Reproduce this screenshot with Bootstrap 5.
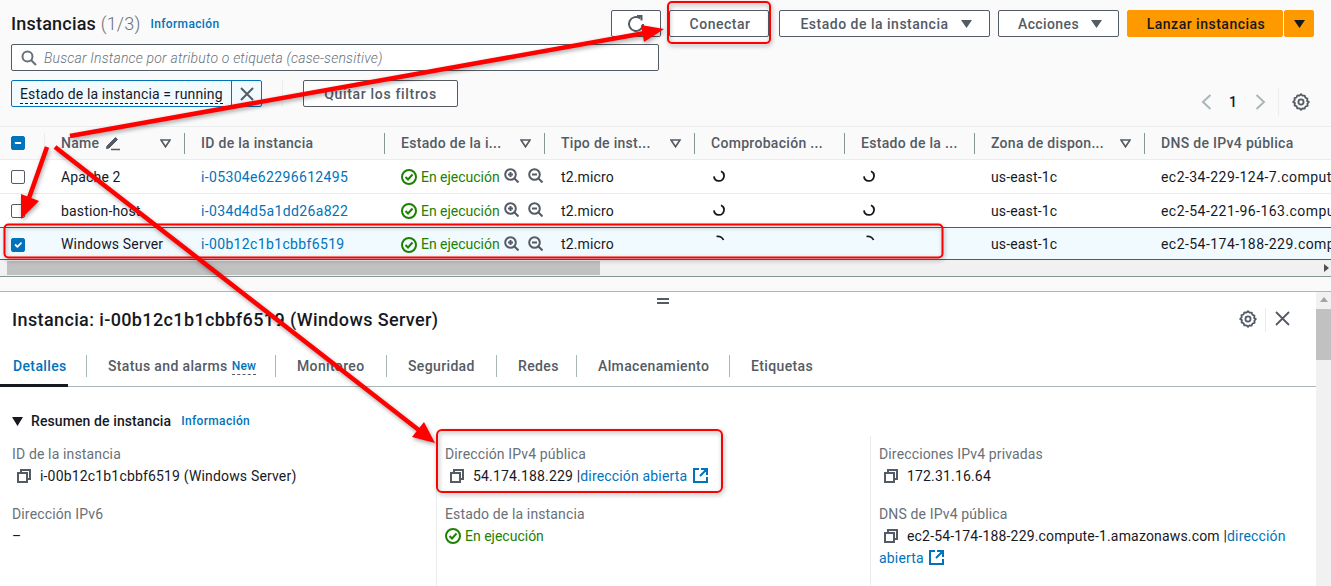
<!DOCTYPE html>
<html lang="es">
<head>
<meta charset="utf-8">
<title>Instancias</title>
<link href="https://cdn.jsdelivr.net/npm/bootstrap@5.3.0/dist/css/bootstrap.min.css" rel="stylesheet">
<style>
html,body{height:586px;overflow:hidden;margin:0}
body{font-family:Roboto,"Liberation Sans",sans-serif;font-size:14px;color:#16191f;background:#fff;position:relative;width:1331px}
a{text-decoration:none;color:#0073bb}
svg{display:block;flex:none}
.toppanel{background:#fafafa;height:126px;padding:10px 17px 0 11px}
.h-title{font-size:18px;font-weight:500;line-height:27px;white-space:nowrap;letter-spacing:.2px}
.h-title span{font-weight:300;color:#687078}
.infolink{font-size:12px;font-weight:500;color:#0073bb;margin-left:10px;letter-spacing:.35px}
.aws-btn{height:27px;border:1px solid #545b64;border-radius:2px;background:#fff;color:#545b64;font-size:14px;font-weight:500;padding:0 0 0 2px;display:flex;align-items:center;justify-content:center;letter-spacing:.5px;line-height:1}
.aws-btn:hover{background:#fff;color:#545b64;border-color:#545b64}
.w-refresh{width:50px;padding:0}.w-con{width:100px;margin-left:8px}.w-est{width:211px;margin-left:10px;padding-left:3px}.w-acc{width:121px;margin-left:8px;padding-left:3px;letter-spacing:.38px}
.w-quit{width:155px;letter-spacing:.68px;padding:1px 0 0}
.aws-orange{background:#ff9900;border-color:#ff9900;color:#16191f}
.aws-orange:hover{background:#ff9900;border-color:#ff9900;color:#16191f}
.w-lan{width:156px;margin-left:8px}.w-car{width:30px;margin-left:1px;padding:0}
.caret-gap{margin-left:12px}
.searchbox{width:648px;height:27px;margin-top:7px;border:1px solid #545b64;border-radius:2px;background:#fff;padding:1px 0 0 9px;gap:7px;font-style:italic;color:#687078;font-size:14px;font-weight:300;letter-spacing:.2px}
.chiprow{margin-top:9px;height:27px}
.chip{width:251px;height:27px;border:1px solid #0073bb;border-radius:2px;background:#f1faff}
.chip-t{flex:1;padding:1px 0 0 8px;white-space:nowrap;line-height:25px;position:relative;letter-spacing:.14px;font-weight:400;color:#16191f}
.chip-t u{text-decoration:none;border-bottom:1px dashed #16191f;padding-bottom:1px}
.chip-x{width:30px;border-left:1px solid #0073bb;display:flex;align-items:center;justify-content:center}
.vdiv{width:1px;height:27px;background:#eaeded;margin:0 20px}
.pager{margin-left:auto;margin-top:15px;height:14px;width:113px;padding-left:0;position:relative}
.pager-num{width:14px;text-align:center;font-weight:500;margin:0 15px 0 14px}
.pager-sep{width:1px;height:28px;background:#eaeded;margin:0 13px 0 12px}
.tablewrap{overflow:hidden;height:134px;border-top:1px solid #eaeded;background:#fff}
table.insts{table-layout:fixed;width:1445px;border-collapse:separate;border-spacing:0;margin:0}
.insts th,.insts td{height:33.3px;padding:0 0 0 16px;white-space:nowrap;overflow:hidden;vertical-align:middle;border-bottom:1px solid #eaeded;background:#fff;font-weight:400;color:#16191f;letter-spacing:.15px;box-shadow:none}
.insts td{padding-top:2px}
.insts th{background:#fafafa;color:#545b64;font-weight:500;letter-spacing:.3px;position:relative}
.insts th.cbx{padding:0 0 0 11px}
.insts td.cbx{padding:2px 0 0 11px}
.insts .sel td{background:#f1faff;border-top:1px solid #0073bb;border-bottom:1px solid #0073bb}
.insts .row-before td{border-bottom:0}
.insts td.dist{color:#0073bb;letter-spacing:.35px}
.insts td.dnscell{letter-spacing:.45px}
.thsep{position:absolute;right:0;top:6px;height:21px;width:1px;background:#879596}
.thsep.lite{background:#eaeded}
.thcell{display:flex;align-items:center}
.sorter{position:absolute;right:14px;top:12px}
.form-check-input.awscheck{width:14px;height:14px;margin:0;border:1px solid #545b64;border-radius:2px;display:block;box-shadow:none;background-color:#fff}
.form-check-input.awscheck:checked,.form-check-input.awscheck:indeterminate{background-color:#0073bb;border-color:#0073bb}
.stat{color:#1d8102;display:flex;align-items:center;gap:4px;letter-spacing:0}
.insts .stat{letter-spacing:-.02px}
.zooms{display:flex;gap:9px;margin-left:0;margin-top:-3px}
.spinner{margin-left:2px;margin-top:-2px}
.spinner.up{margin-left:3px;margin-top:-8px}
.hscroll{background:#f1f1f1;display:flex;padding:1px 0 0 7px;border-bottom:1px solid #879596;height:17px}
.hthumb{width:593px;height:14px;background:#c1c1c1}
.hscroll-r{margin-left:auto;margin-right:2px;margin-top:3px}
.gapband{height:15px;background:#fafafa;border-bottom:1px solid #aab7b8}
.detail{display:flex;height:294px;overflow:hidden;background:#fff;position:relative}
.dmain{width:1316px;flex:none}
.vscroll{width:15px;background:#f1f1f1;flex:none;padding-top:17px;position:relative}
.vthumb{height:51px;background:#c1c1c1}
.grip{position:absolute;left:657px;top:6px;width:12px;height:6px;border-top:2px solid #545b64;border-bottom:2px solid #545b64}
.dhead{height:58px;padding:16px 12px 0 12px}
.dh-title{font-size:18px;font-weight:500;line-height:24px;letter-spacing:.38px}
.dh-right{padding-right:14px}
.dh-sep{width:1px;height:24px;background:#eaeded;margin:0 8px}
.tabbar{height:37px;border-bottom:1px solid #aab7b8;position:relative}
.tabitem{height:36px;color:#545b64;font-weight:500;letter-spacing:.36px;display:flex;align-items:center;white-space:nowrap;position:relative;padding-bottom:4px}
.tabitem.on{color:#0073bb}
.tabitem.on::before{content:"";position:absolute;left:0;bottom:-1px;width:68px;height:3px;background:#16191f}
.tabitem.divided::after{content:"";position:absolute;right:0;top:5px;height:22px;width:1px;background:#aab7b8}
.tnew{color:#0073bb;font-size:12px;border-bottom:1px dashed #545b64;margin:2px 0 0 4px;line-height:15px;letter-spacing:.2px}
.rsum{height:20px;padding:24px 0 0 12px;box-sizing:content-box;font-size:14px;font-weight:500;line-height:20px;letter-spacing:.1px;color:#16191f}
.colsgrid{display:grid;grid-template-columns:424px 434px 1fr;margin-left:12px;margin-top:5px}
.gcol{padding-left:8px;padding-right:5px;border-left:1px solid #eaeded;padding-top:8px;height:160px}
.gcol:first-child{border-left:0;padding-left:0}
.flabel{color:#687078;line-height:20px;letter-spacing:.14px;height:20px}
.fval{line-height:22px;letter-spacing:.17px;margin-top:1px;height:39px}
.copyic{display:inline-block;vertical-align:-2px;margin:0 9px 0 5px}
.extic{display:inline-block;vertical-align:-2px;margin-left:2px}
.overlay{position:absolute;left:0;top:0;width:1331px;height:586px;pointer-events:none;overflow:visible}
</style>
</head>
<body>
<svg width="0" height="0" style="position:absolute" aria-hidden="true">
  <symbol id="ok" viewBox="0 0 16 16"><g fill="none" stroke="#1d8102" stroke-width="2"><circle cx="8" cy="8" r="7"/><path d="M4.500 8 7 10.500 11.500 5.500"/></g></symbol>
  <symbol id="zin" viewBox="0 0 15 15"><g fill="none" stroke="#545b64" stroke-width="2"><circle cx="6.500" cy="6.500" r="5.300"/><path d="M10.500 10.500 14.500 14.500M4 6.500H9M6.500 4V9"/></g></symbol>
  <symbol id="zout" viewBox="0 0 15 15"><g fill="none" stroke="#545b64" stroke-width="2"><circle cx="6.500" cy="6.500" r="5.300"/><path d="M10.500 10.500 14.500 14.500M4 6.500H9"/></g></symbol>
  <symbol id="spin" viewBox="0 0 12 12"><path d="M8 1.300A5 5 0 1 1 1 6.300" fill="none" stroke="#16191f" stroke-width="1.800"/></symbol>
  <symbol id="spinup" viewBox="0 0 12 12"><path d="M2.500 1.500A6 6 0 0 1 9.500 5" fill="none" stroke="#16191f" stroke-width="1.800"/></symbol>
  <symbol id="sort" viewBox="0 0 11 9"><path d="M1 1H10L5.500 7.800Z" fill="none" stroke="#545b64" stroke-width="1.600"/></symbol>
  <symbol id="copy" viewBox="0 0 14 14"><g fill="none" stroke="#545b64" stroke-width="2"><path d="M4 4V1H13V10H10"/><rect x="1" y="4" width="9" height="9"/></g></symbol>
  <symbol id="ext" viewBox="0 0 15 15"><path d="M6 1H1V14H14V9M8 1H14V7M14 1 7 8" fill="none" stroke="#0073bb" stroke-width="2"/></symbol>
  <symbol id="gear" viewBox="0 0 16 16"><g fill="none" stroke="#545b64" stroke-width="1.600"><path d="M8 1 9.300 2.400 11.300 2.300 11.900 4.200 13.700 5 13.400 7 15 8 13.700 9.500 13.900 11.400 12 12 11.200 13.800 9.300 13.600 8 15 6.700 13.600 4.700 13.700 4.100 11.900 2.300 11 2.600 9 1 8 2.400 6.500 2.200 4.600 4 4 4.800 2.200 6.700 2.400Z" stroke-linejoin="round"/><circle cx="8" cy="8" r="2.300"/></g></symbol>
</svg>
<div class="toppanel">
  <div class="d-flex align-items-center">
    <div class="h-title">Instancias <span>(1/3)</span></div>
    <a class="infolink" href="#">Información</a>
    <button class="btn aws-btn w-refresh ms-auto" type="button" aria-label="Actualizar">
      <svg width="18" height="18" viewBox="0 0 18 18" fill="none" stroke="#545b64" stroke-width="2"><path d="M13.500 3.600A7 7 0 1 0 16 9"/><path d="M10 1 L14.500 1 L14.500 5.500" /></svg>
    </button>
    <button class="btn aws-btn w-con" type="button">Conectar</button>
    <button class="btn aws-btn w-est" type="button">Estado de la instancia<svg class="caret-gap" width="11" height="8" viewBox="0 0 11 8"><path d="M0 0H11L5.500 8Z" fill="#545b64"/></svg></button>
    <button class="btn aws-btn w-acc" type="button">Acciones<svg class="caret-gap" width="11" height="8" viewBox="0 0 11 8"><path d="M0 0H11L5.500 8Z" fill="#545b64"/></svg></button>
    <button class="btn aws-btn aws-orange w-lan" type="button">Lanzar instancias</button>
    <button class="btn aws-btn aws-orange w-car" type="button" aria-label="Más"><svg width="11" height="8" viewBox="0 0 11 8"><path d="M0 0H11L5.500 8Z" fill="#16191f"/></svg></button>
  </div>
  <div class="searchbox d-flex align-items-center">
    <svg width="16" height="16" viewBox="0 0 16 16" fill="none" stroke="#687078" stroke-width="2"><circle cx="6.500" cy="6.500" r="5"/><path d="M10.200 10.200 15 15"/></svg>
    <span>Buscar Instance por atributo o etiqueta (case-sensitive)</span>
  </div>
  <div class="chiprow d-flex">
    <div class="chip d-flex">
      <div class="chip-t"><u>Estado de la instancia = running</u></div>
      <div class="chip-x"><svg width="14" height="14" viewBox="0 0 14 14" stroke="#545b64" stroke-width="2"><path d="M1 1 13 13M13 1 1 13"/></svg></div>
    </div>
    <div class="vdiv"></div>
    <button class="btn aws-btn w-quit" type="button">Quitar los filtros</button>
    <div class="pager d-flex align-items-center">
      <svg width="11" height="16" viewBox="0 0 11 16" fill="none" stroke="#aab7b8" stroke-width="2"><path d="M9.500 1 2 8l7.500 7"/></svg>
      <div class="pager-num">1</div>
      <svg width="11" height="16" viewBox="0 0 11 16" fill="none" stroke="#aab7b8" stroke-width="2"><path d="M1.500 1 9 8l-7.500 7"/></svg>
      <div class="pager-sep"></div>
      <svg width="18" height="18"><use href="#gear"/></svg>
    </div>
  </div>
</div>

<div class="tablewrap">
<table class="table insts">
  <colgroup><col style="width:45px"><col style="width:140px"><col style="width:200px"><col style="width:160px"><col style="width:150px"><col style="width:150px"><col style="width:130px"><col style="width:170px"><col style="width:300px"></colgroup>
  <thead><tr>
    <th class="cbx"><input id="allcheck" class="form-check-input awscheck" type="checkbox" aria-label="Todas"><i class="thsep lite"></i></th>
    <th><div class="thcell">Name<svg style="margin-left:5px" width="17" height="16" viewBox="0 0 17 16" fill="none" stroke="#545b64"><path d="M3 11 11.500 2.500 13.500 4.500 5 13 2.500 13.500Z" fill="#545b64" stroke-width="1"/><path d="M7 14.500H16" stroke-width="1.500"/></svg></div>
      <svg class="sorter" width="11" height="9"><use href="#sort"/></svg><i class="thsep"></i></th>
    <th>ID de la instancia<i class="thsep"></i></th>
    <th>Estado de la i...<svg class="sorter" width="11" height="9"><use href="#sort"/></svg><i class="thsep"></i></th>
    <th>Tipo de inst...<svg class="sorter" width="11" height="9"><use href="#sort"/></svg><i class="thsep"></i></th>
    <th>Comprobación ...<i class="thsep"></i></th>
    <th>Estado de la ...<i class="thsep"></i></th>
    <th>Zona de dispon...<svg class="sorter" width="11" height="9"><use href="#sort"/></svg><i class="thsep"></i></th>
    <th>DNS de IPv4 pública</th>
  </tr></thead>
  <tbody>
  <tr>
    <td class="cbx"><input class="form-check-input awscheck" type="checkbox" aria-label="Apache 2"></td>
    <td>Apache 2</td><td class="dist">i-05304e62296612495</td>
    <td><div class="stat"><svg width="16" height="16"><use href="#ok"/></svg>En ejecución<div class="zooms"><svg width="15" height="15"><use href="#zin"/></svg><svg width="15" height="15"><use href="#zout"/></svg></div></div></td>
    <td>t2.micro</td>
    <td><svg class="spinner" width="12" height="12"><use href="#spin"/></svg></td>
    <td><svg class="spinner" width="12" height="12"><use href="#spin"/></svg></td>
    <td>us-east-1c</td><td class="dnscell">ec2-34-229-124-7.compute-1.amazonaws.com</td>
  </tr>
  <tr class="row-before">
    <td class="cbx"><input class="form-check-input awscheck" type="checkbox" aria-label="bastion-host"></td>
    <td>bastion-host</td><td class="dist">i-034d4d5a1dd26a822</td>
    <td><div class="stat"><svg width="16" height="16"><use href="#ok"/></svg>En ejecución<div class="zooms"><svg width="15" height="15"><use href="#zin"/></svg><svg width="15" height="15"><use href="#zout"/></svg></div></div></td>
    <td>t2.micro</td>
    <td><svg class="spinner" width="12" height="12"><use href="#spin"/></svg></td>
    <td><svg class="spinner" width="12" height="12"><use href="#spin"/></svg></td>
    <td>us-east-1c</td><td class="dnscell">ec2-54-221-96-163.compute-1.amazonaws.com</td>
  </tr>
  <tr class="sel">
    <td class="cbx"><input class="form-check-input awscheck" type="checkbox" checked aria-label="Windows Server"></td>
    <td>Windows Server</td><td class="dist">i-00b12c1b1cbbf6519</td>
    <td><div class="stat"><svg width="16" height="16"><use href="#ok"/></svg>En ejecución<div class="zooms"><svg width="15" height="15"><use href="#zin"/></svg><svg width="15" height="15"><use href="#zout"/></svg></div></div></td>
    <td>t2.micro</td>
    <td><svg class="spinner up" width="12" height="12"><use href="#spinup"/></svg></td>
    <td><svg class="spinner up" width="12" height="12"><use href="#spinup"/></svg></td>
    <td>us-east-1c</td><td class="dnscell">ec2-54-174-188-229.compute-1.amazonaws.com</td>
  </tr>
  </tbody>
</table>
</div>
<div class="hscroll"><div class="hthumb"></div><svg class="hscroll-r" width="5" height="8" viewBox="0 0 5 8"><path d="M0 0 5 4 0 8Z" fill="#505050"/></svg></div>
<div class="gapband"></div>

<div class="detail">
  <div class="grip"></div>
  <div class="dmain">
    <div class="dhead d-flex">
      <div class="dh-title">Instancia: i-00b12c1b1cbbf6519 (Windows Server)</div>
      <div class="ms-auto d-flex align-items-start dh-right">
        <svg width="18" height="18" style="margin-top:2px"><use href="#gear"/></svg>
        <div class="dh-sep"></div>
        <svg width="15" height="15" viewBox="0 0 15 15" stroke="#545b64" stroke-width="1.800" style="margin-left:1px;margin-top:3px"><path d="M1 1 14 14M14 1 1 14"/></svg>
      </div>
    </div>
    <div class="tabbar d-flex">
      <div class="tabitem on divided" style="padding-left:13px;width:87px">Detalles</div>
      <div class="tabitem divided" style="width:189px;padding-left:21px">Status and alarms<span class="tnew">New</span></div>
      <div class="tabitem divided" style="width:111px;padding-left:21px">Monitoreo</div>
      <div class="tabitem divided" style="width:110px;padding-left:21px">Seguridad</div>
      <div class="tabitem divided" style="width:80px;padding-left:21px">Redes</div>
      <div class="tabitem divided" style="width:153px;padding-left:21px">Almacenamiento</div>
      <div class="tabitem" style="width:100px;padding-left:21px">Etiquetas</div>
    </div>
    <div class="rsum d-flex align-items-center">
      <svg width="11" height="9" viewBox="0 0 11 9" style="margin-right:8px"><path d="M0 0H11L5.500 9Z" fill="#16191f"/></svg>Resumen de instancia<a class="infolink" href="#">Información</a>
    </div>
    <div class="colsgrid">
      <div class="gcol">
        <div class="flabel">ID de la instancia</div>
        <div class="fval"><svg class="copyic" width="14" height="14"><use href="#copy"/></svg>i-00b12c1b1cbbf6519 (Windows Server)</div>
        <div class="flabel">Dirección IPv6</div>
        <div class="fval">–</div>
      </div>
      <div class="gcol">
        <div class="flabel">Dirección IPv4 pública</div>
        <div class="fval"><svg class="copyic" width="14" height="14"><use href="#copy"/></svg>54.174.188.229 |<a href="#">dirección abierta</a> <svg class="extic" width="15" height="15"><use href="#ext"/></svg></div>
        <div class="flabel">Estado de la instancia</div>
        <div class="fval"><div class="stat"><svg width="16" height="16"><use href="#ok"/></svg>En ejecución</div></div>
      </div>
      <div class="gcol">
        <div class="flabel">Direcciones IPv4 privadas</div>
        <div class="fval"><svg class="copyic" width="14" height="14"><use href="#copy"/></svg>172.31.16.64</div>
        <div class="flabel">DNS de IPv4 pública</div>
        <div class="fval"><svg class="copyic" width="14" height="14"><use href="#copy"/></svg>ec2-54-174-188-229.compute-1.amazonaws.com |<a href="#">dirección abierta</a> <svg class="extic" width="15" height="15"><use href="#ext"/></svg></div>
      </div>
    </div>
  </div>
  <div class="vscroll"><svg style="position:absolute;left:4px;top:5px" width="8" height="5" viewBox="0 0 8 5"><path d="M4 0 8 5H0Z" fill="#a3a3a3"/></svg><div class="vthumb"></div></div>
</div>

<svg class="overlay" viewBox="0 0 1331 586" fill="none" aria-hidden="true">
  <g style="filter:drop-shadow(1px 2px 2px rgba(0,0,0,.35))">
    <rect x="668" y="2" width="102" height="41" rx="4" stroke="#f00" stroke-width="2"/>
    <rect x="4.500" y="224.500" width="938" height="33" rx="4" stroke="#f00" stroke-width="2"/>
    <rect x="437" y="430" width="285" height="62" rx="5" stroke="#f00" stroke-width="2"/>
    <path d="M70 136 645 33" stroke="#f00" stroke-width="4.500"/>
    <path d="M664 29 644 42 641 25Z" fill="#f00"/>
    <path d="M47 147 29 198" stroke="#f00" stroke-width="4.500"/>
    <path d="M21 219 21 194 39 201Z" fill="#f00"/>
    <path d="M55 147 420 431" stroke="#f00" stroke-width="4.500"/>
    <path d="M435 443 412 437 424 422Z" fill="#f00"/>
  </g>
</svg>
<script src="https://cdn.jsdelivr.net/npm/bootstrap@5.3.0/dist/js/bootstrap.bundle.min.js"></script>
<script>document.getElementById('allcheck').indeterminate=true;</script>
</body>
</html>
